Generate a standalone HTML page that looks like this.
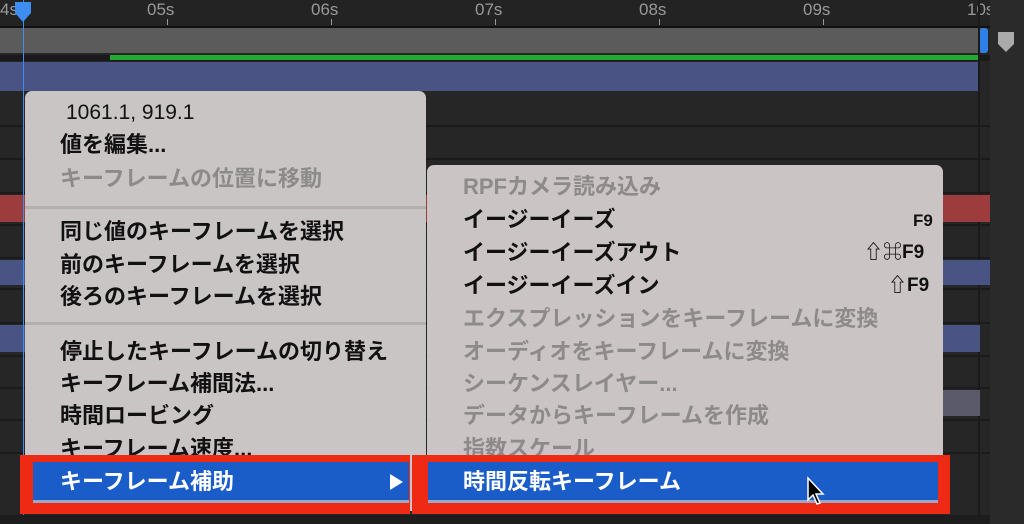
<!DOCTYPE html><html><head><meta charset="utf-8"><style>
body{margin:0;width:1024px;height:524px;overflow:hidden;background:#262626;position:relative;font-family:"Liberation Sans","Noto Sans CJK JP",sans-serif}
.a{position:absolute}
.t{position:absolute;font-size:22px;line-height:26px;white-space:nowrap;color:#111;font-weight:bold;letter-spacing:0}
.d{color:#8d8a8a}
.r{position:absolute;left:0;width:990px;height:2px;background:#1b1b1b}
</style></head><body>
<div class="a" style="left:0;top:0;width:990px;height:27px;background:#232323"></div>
<div class="a" style="left:0;top:26px;width:990px;height:2px;background:#111"></div>
<div class="a" style="left:147px;top:0;color:#999;font-size:17px">05s</div>
<div class="a" style="left:311px;top:0;color:#999;font-size:17px">06s</div>
<div class="a" style="left:475px;top:0;color:#999;font-size:17px">07s</div>
<div class="a" style="left:639px;top:0;color:#999;font-size:17px">08s</div>
<div class="a" style="left:803px;top:0;color:#999;font-size:17px">09s</div>
<div class="a" style="left:967px;top:0;color:#999;font-size:17px">10s</div>
<div class="a" style="left:0;top:0;color:#999;font-size:17px">4s</div>
<div class="a" style="left:167px;top:19px;width:1px;height:6px;background:#999"></div>
<div class="a" style="left:331px;top:19px;width:1px;height:6px;background:#999"></div>
<div class="a" style="left:495px;top:19px;width:1px;height:6px;background:#999"></div>
<div class="a" style="left:659px;top:19px;width:1px;height:6px;background:#999"></div>
<div class="a" style="left:823px;top:19px;width:1px;height:6px;background:#999"></div>
<div class="a" style="left:0;top:28px;width:985px;height:25px;background:#5b5b5b"></div>
<div class="a" style="left:980px;top:28px;width:8px;height:25px;background:#2f7fe8;border-radius:3px"></div>
<div class="a" style="left:0;top:55px;width:990px;height:6px;background:#1a1a1a"></div>
<div class="a" style="left:110px;top:55px;width:870px;height:5px;background:#22aa33"></div>
<div class="a" style="left:0;top:62px;width:978px;height:29px;background:#4a5484"></div>
<div class="r" style="top:125px"></div><div class="r" style="top:158px"></div><div class="r" style="top:192px"></div><div class="r" style="top:224px"></div><div class="r" style="top:257px"></div><div class="r" style="top:288px"></div><div class="r" style="top:322px"></div><div class="r" style="top:355px"></div><div class="r" style="top:387px"></div><div class="r" style="top:419px"></div><div class="r" style="top:452px"></div>
<div class="a" style="left:990px;top:0;width:34px;height:524px;background:#2a2a2a"></div>
<div class="a" style="left:978px;top:0;width:2px;height:524px;background:#1a1a1a"></div>
<div class="a" style="left:998px;top:32px;width:16px;height:20px;background:#aaa;clip-path:polygon(0 0,100% 0,100% 60%,50% 100%,0 60%)"></div>
<div class="a" style="left:0;top:195px;width:990px;height:27px;background:#9c3c3c"></div>
<div class="a" style="left:940px;top:260px;width:50px;height:25px;background:#4a5484"></div>
<div class="a" style="left:940px;top:325px;width:40px;height:27px;background:#4a5484"></div>
<div class="a" style="left:940px;top:390px;width:40px;height:26px;background:#5a5a6a"></div>
<div class="a" style="left:0;top:325px;width:25px;height:27px;background:#4a5484"></div>
<div class="a" style="left:0;top:260px;width:25px;height:25px;background:#4a5484"></div>
<div class="a" style="left:23px;top:0;width:1px;height:524px;background:#3d8ef0"></div>
<div class="a" style="left:15px;top:2px;width:16px;height:20px;background:#3d8ef0;clip-path:polygon(0 0,100% 0,100% 55%,50% 100%,0 55%)"></div>
<div class="a" style="left:0;top:515px;width:990px;height:9px;background:#1d1d1d"></div>

<div class="a" style="left:25px;top:91px;width:401px;height:420px;background:#c9c5c5;border-radius:7px"></div>
<div class="a" style="left:427px;top:165px;width:516px;height:345px;background:#cbc4c4;border-radius:7px"></div>
<div class="a" style="left:25px;top:206px;width:401px;height:3px;background:#b3afaf"></div>
<div class="a" style="left:25px;top:322px;width:401px;height:3px;background:#b3afaf"></div>

<div class="t" style="left:66px;top:100px;font-weight:normal;font-size:21px">1061.1, 919.1</div>
<div class="t" style="left:60px;top:132px">値を編集...</div>
<div class="t d" style="left:60px;top:166px">キーフレームの位置に移動</div>
<div class="t" style="left:60px;top:219px">同じ値のキーフレームを選択</div>
<div class="t" style="left:60px;top:252px">前のキーフレームを選択</div>
<div class="t" style="left:60px;top:284px">後ろのキーフレームを選択</div>
<div class="t" style="left:60px;top:339px">停止したキーフレームの切り替え</div>
<div class="t" style="left:60px;top:371px">キーフレーム補間法...</div>
<div class="t" style="left:60px;top:403px">時間ロービング</div>
<div class="t" style="left:60px;top:436px">キーフレーム速度...</div>

<div class="t d" style="left:463px;top:174px">RPFカメラ読み込み</div>
<div class="t" style="left:463px;top:207px">イージーイーズ</div>
<div class="t" style="left:463px;top:240px">イージーイーズアウト</div>
<div class="t" style="left:463px;top:273px">イージーイーズイン</div>
<div class="t" style="left:913px;top:208px;font-size:17px">F9</div>
<div class="t" style="left:864px;top:240px;font-size:19px">⇧⌘F9</div>
<div class="t" style="left:888px;top:273px;font-size:19px">⇧F9</div>
<div class="t d" style="left:463px;top:306px">エクスプレッションをキーフレームに変換</div>
<div class="t d" style="left:463px;top:339px">オーディオをキーフレームに変換</div>
<div class="t d" style="left:463px;top:371px">シーケンスレイヤー...</div>
<div class="t d" style="left:463px;top:403px">データからキーフレームを作成</div>
<div class="t d" style="left:463px;top:436px">指数スケール</div>

<div class="a" style="left:20px;top:455px;width:390px;height:59px;background:#ee2a14"></div>
<div class="a" style="left:412px;top:455px;width:538px;height:59px;background:#ee2a14"></div>
<div class="a" style="left:33px;top:462px;width:376px;height:38px;background:#1a5cc8;border-bottom:3px solid #9aa7c8"></div>
<div class="a" style="left:428px;top:462px;width:510px;height:38px;background:#1a5cc8;border-bottom:3px solid #9aa7c8"></div>
<div class="t" style="left:60px;top:469px;color:#fff">キーフレーム補助</div>
<div class="a" style="left:390px;top:474px;width:0;height:0;border-left:13px solid #fff;border-top:8px solid transparent;border-bottom:8px solid transparent"></div>
<div class="t" style="left:463px;top:469px;color:#fff">時間反転キーフレーム</div>
<svg class="a" style="left:806px;top:476px" width="20" height="30" viewBox="0 0 20 30"><path d="M2 2 L2 24 L7 19 L11 28 L14 27 L10 18 L17 18 Z" fill="#000" stroke="#fff" stroke-width="1.5"/></svg>
</body></html>
